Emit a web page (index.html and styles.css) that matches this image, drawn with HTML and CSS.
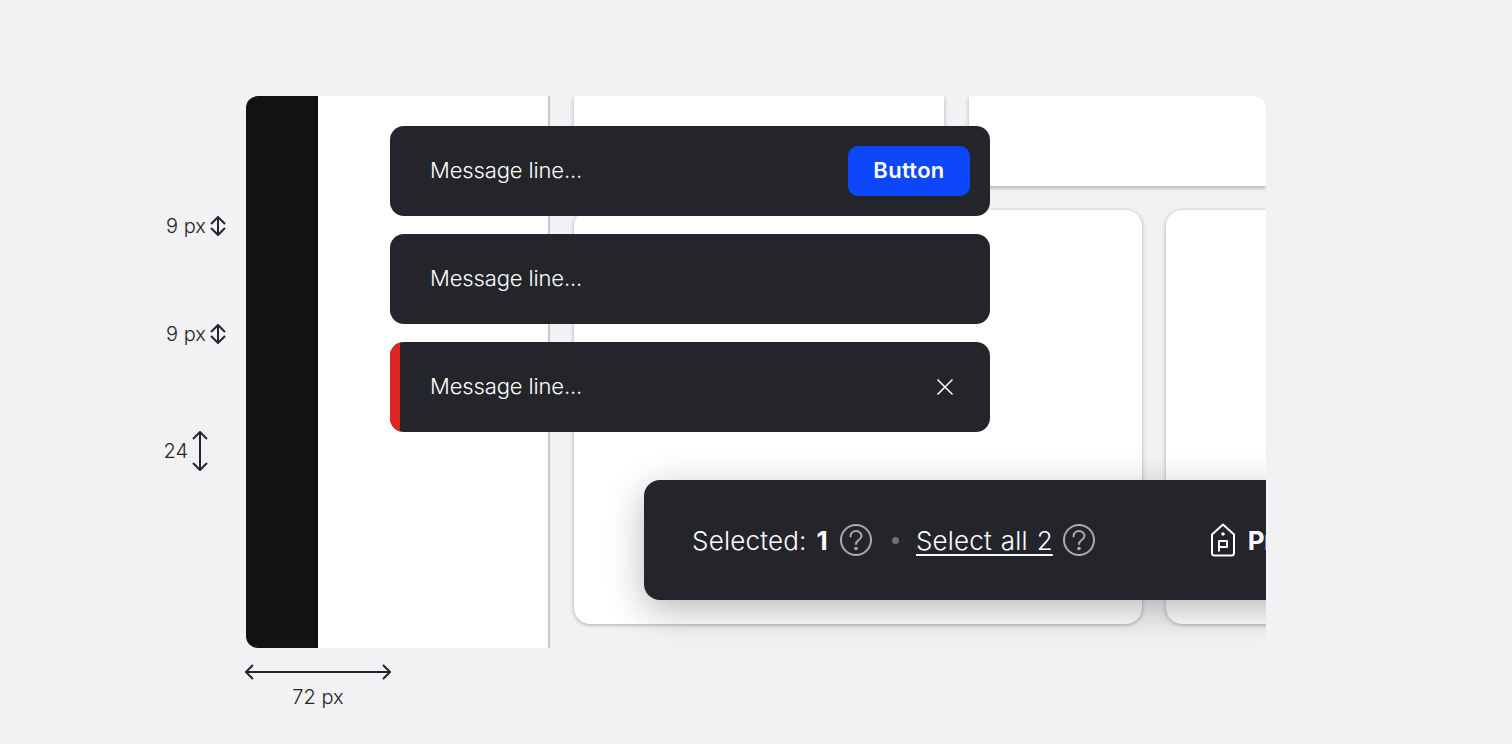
FILE: index.html
```html
<!DOCTYPE html>
<html lang="en">
<head>
<meta charset="utf-8">
<title>Snackbar layout</title>
<link rel="stylesheet" href="styles.css">
</head>
<body>
<div class="stage">
  <div class="frame">
    <div class="rail"></div>
    <div class="panel"></div>
    <div class="content">
      <div class="row row-top">
        <div class="card card-a"></div>
        <div class="card card-b"></div>
      </div>
      <div class="row row-main">
        <div class="card card-c"></div>
        <div class="card card-d"></div>
      </div>
    </div>
    <div class="toasts">
      <div class="toast">
        <span class="toast-text">Message line...</span>
        <button class="toast-btn">Button</button>
      </div>
      <div class="toast">
        <span class="toast-text">Message line...</span>
      </div>
      <div class="toast toast-error">
        <span class="toast-text">Message line...</span>
        <svg class="close" width="24" height="24" viewBox="0 0 24 24" fill="none" stroke="#fff" stroke-width="1.5"><path d="M4.5 4.5l15 15M19.5 4.5l-15 15"/></svg>
      </div>
    </div>
    <div class="selbar">
      <span class="sel-label">Selected: <b>1</b></span>
      <svg class="help help-first" width="32" height="32" viewBox="0 0 32 32" fill="none" stroke="#a9abb0" stroke-width="2"><circle cx="16" cy="16" r="15"/><path d="M10.500 12.500c0-3.200 2.500-5.500 5.500-5.500s5.500 2.200 5.500 5c0 4-5.500 4-5.500 8" stroke-linecap="round"/><circle cx="16" cy="24.500" r="1.800" fill="#a9abb0" stroke="none"/></svg>
      <span class="dot"></span>
      <span class="sel-link">Select all 2</span>
      <svg class="help help-second" width="32" height="32" viewBox="0 0 32 32" fill="none" stroke="#a9abb0" stroke-width="2"><circle cx="16" cy="16" r="15"/><path d="M10.500 12.500c0-3.200 2.500-5.500 5.500-5.500s5.500 2.200 5.500 5c0 4-5.500 4-5.500 8" stroke-linecap="round"/><circle cx="16" cy="24.500" r="1.800" fill="#a9abb0" stroke="none"/></svg>
      <svg class="tag" width="26" height="34" viewBox="0 0 26 34" fill="none" stroke="#fff" stroke-width="2" stroke-linejoin="round"><path d="M13 1.500L2 11.500V30a2.500 2.500 0 0 0 2.500 2.500h17a2.500 2.500 0 0 0 2.500-2.500V11.500z"/><circle cx="13" cy="11" r="1.800" fill="#fff" stroke="none"/><path d="M9 28.500V18h8v6H9"/></svg>
      <span class="sel-action">Price</span>
    </div>
  </div>

  <div class="note note-a"><span>9 px</span>
    <svg width="16" height="20" viewBox="0 0 16 20" fill="none" stroke="#24252a" stroke-width="2"><path d="M8 1v18M1 8l7-7 7 7M1 12l7 7 7-7"/></svg>
  </div>
  <div class="note note-b"><span>9 px</span>
    <svg width="16" height="20" viewBox="0 0 16 20" fill="none" stroke="#24252a" stroke-width="2"><path d="M8 1v18M1 8l7-7 7 7M1 12l7 7 7-7"/></svg>
  </div>
  <div class="note note-c"><span>24</span>
    <svg width="16" height="40" viewBox="0 0 16 40" fill="none" stroke="#24252a" stroke-width="2"><path d="M8 1v38M1 8l7-7 7 7M1 32l7 7 7-7"/></svg>
  </div>
  <div class="measure">
    <svg width="146" height="16" viewBox="0 0 146 16" fill="none" stroke="#24252a" stroke-width="2"><path d="M1 8h144M8 1L1 8l7 7M138 1l7 7-7 7"/></svg>
    <span>72 px</span>
  </div>
</div>
</body>
</html>
```

FILE: styles.css
```css
* { box-sizing: border-box; }
html, body { margin: 0; height: 100%; }
body {
  background: #f2f2f4;
  font-family: Inter, "Liberation Sans", sans-serif;
  overflow: hidden;
}
.stage {
  position: relative;
  width: 1512px;
  height: 744px;
  padding: 96px 246px;
}
.frame {
  position: relative;
  display: flex;
  width: 1020px;
  height: 552px;
  border-radius: 12px;
  overflow: hidden;
  background: #f2f2f4;
}
.rail { flex: 0 0 72px; background: #111214; }
.panel {
  flex: 0 0 232px;
  background: #fff;
  border-right: 2px solid #c9cacd;
}
.content {
  flex: 1;
  min-width: 0;
  display: flex;
  flex-direction: column;
  gap: 24px;
  padding-left: 24px;
}
.row { display: flex; flex-shrink: 0; }
.row-top { height: 90px; gap: 25px; }
.row-main { height: 414px; gap: 24px; }
.card { background: #fff; flex-shrink: 0; }
.card-a {
  width: 370px;
  box-shadow: 0 2px 4px rgba(20, 22, 28, .3);
  border-radius: 0 0 12px 12px;
}
.card-b {
  width: 297px;
  border-radius: 0 12px 0 0;
  box-shadow: 0 2px 4px rgba(20, 22, 28, .3);
}
.card-c, .card-d {
  border-radius: 16px;
  box-shadow: 0 1px 4px rgba(20, 22, 28, .32);
}
.card-c { width: 568px; }
.card-d { width: 300px; }

.toasts {
  position: absolute;
  left: 144px;
  top: 30px;
  width: 600px;
  display: flex;
  flex-direction: column;
  gap: 18px;
}
.toast {
  position: relative;
  display: flex;
  align-items: center;
  justify-content: space-between;
  height: 90px;
  padding: 0 20px 0 40px;
  background: #24252b;
  border-radius: 14px;
  overflow: hidden;
  color: #fff;
}
.toast-error::before {
  content: "";
  position: absolute;
  left: 0;
  top: 0;
  bottom: 0;
  width: 10px;
  background: #dc2626;
}
.toast-text {
  position: relative;
  top: -1px;
  font-size: 22px;
  line-height: 32px;
  font-weight: 350;
  letter-spacing: -0.13px;
}
.toast-btn {
  width: 122px;
  height: 50px;
  padding: 0 0 2px;
  border: 0;
  border-radius: 10px;
  background: #0d46fb;
  color: #fff;
  font: 600 22px/32px Inter, "Liberation Sans", sans-serif;
  letter-spacing: 0.3px;
}
.close { margin-right: 13px; }

.selbar {
  position: absolute;
  left: 398px;
  top: 384px;
  width: 760px;
  height: 120px;
  display: flex;
  align-items: center;
  padding-left: 48px;
  background: #24252b;
  border-radius: 16px;
  color: #fff;
  font-size: 26px;
  line-height: 36px;
  font-weight: 350;
  letter-spacing: 0.2px;
  word-spacing: 1.5px;
  box-shadow: 0 10px 36px rgba(20, 22, 28, .3);
}
.sel-label, .sel-link, .sel-action { position: relative; top: 1px; }
.sel-label b { margin-left: 1px; font-weight: 700; }
.help { flex-shrink: 0; }
.help-first { margin-left: 12px; }
.help-second { margin-left: 10px; }
.dot {
  width: 7px;
  height: 7px;
  margin: 0 17px 0 20px;
  border-radius: 50%;
  background: #6d6f75;
}
.sel-link {
  letter-spacing: 0.15px;
  text-decoration: underline;
  text-decoration-thickness: 2px;
  text-underline-offset: 4px;
}
.tag { margin-left: 115px; }
.sel-action { margin-left: 12px; font-weight: 700; letter-spacing: -0.5px; }

.note {
  position: absolute;
  display: flex;
  align-items: center;
  color: #24252a;
  font-size: 20px;
  line-height: 28px;
  font-weight: 350;
}
.note-a { left: 166px; top: 212px; gap: 4px; }
.note-b { left: 166px; top: 320px; gap: 4px; }
.note-c { left: 163.500px; top: 431px; gap: 4px; }
.measure {
  position: absolute;
  left: 245px;
  top: 664px;
  width: 146px;
  display: flex;
  flex-direction: column;
  align-items: center;
  gap: 3px;
  color: #24252a;
  font-size: 20px;
  line-height: 28px;
  font-weight: 350;
}
```
